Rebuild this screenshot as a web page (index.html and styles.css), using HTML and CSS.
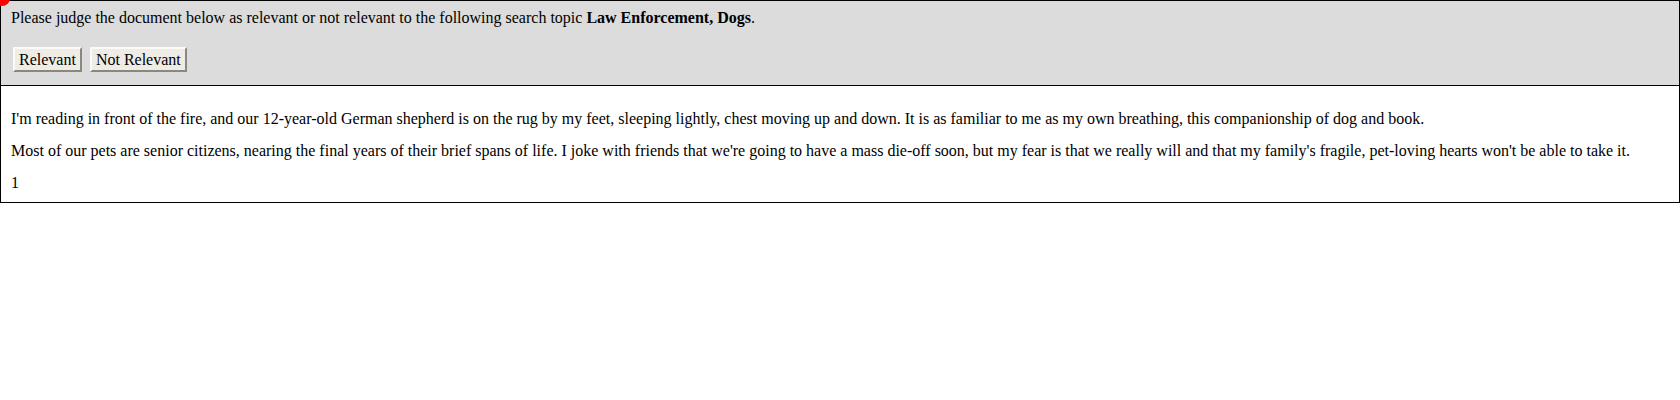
FILE: index.html
```html
<!DOCTYPE html>
<html>
<head>
<meta charset="utf-8">
<link rel="stylesheet" href="styles.css">
</head>
<body>
<div class="dot"></div>
<div class="judge">
  <div class="prompt">Please judge the document below as relevant or not relevant to the following search topic <b>Law Enforcement, Dogs</b>.</div>
  <div class="actions">
    <button class="btn">Relevant</button>
    <button class="btn">Not Relevant</button>
  </div>
</div>
<div class="doc">
  <p>I'm reading in front of the fire, and our 12-year-old German shepherd is on the rug by my feet, sleeping lightly, chest moving up and down. It is as familiar to me as my own breathing, this companionship of dog and book.</p>
  <p>Most of our pets are senior citizens, nearing the final years of their brief spans of life. I joke with friends that we're going to have a mass die-off soon, but my fear is that we really will and that my family's fragile, pet-loving hearts won't be able to take it.</p>
  <p>1</p>
</div>
</body>
</html>
```
FILE: styles.css
```css
html, body {
  margin: 0;
  padding: 0;
  background: #fff;
}
body {
  font-family: "Liberation Serif", "Times New Roman", serif;
  font-size: 16px;
  color: #000;
}
.dot {
  position: absolute;
  left: -6px;
  top: -10px;
  width: 16px;
  height: 16px;
  border-radius: 50%;
  background: #f00;
}
.judge {
  background: #dcdcdc;
  border: 1px solid #000;
  padding: 8px 10px 13px;
}
.prompt {
  line-height: 18px;
}
.actions {
  display: flex;
  gap: 8px;
  margin-top: 20px;
  margin-left: 2px;
}
.btn {
  font-family: "Liberation Serif", "Times New Roman", serif;
  font-size: 16px;
  color: #000;
  background: #efece6;
  border: 2px solid;
  border-color: #fbfaf8 #8a8780 #8a8780 #fbfaf8;
  padding: 2px 4px 1px;
  line-height: 18px;
  margin: 0;
}
.doc {
  border: 1px solid #000;
  border-top: 0;
  padding: 24px 10px 10px;
}
.doc p {
  margin: 0 0 14px;
  line-height: 18px;
}
.doc p:last-child {
  margin-bottom: 0;
}
```
